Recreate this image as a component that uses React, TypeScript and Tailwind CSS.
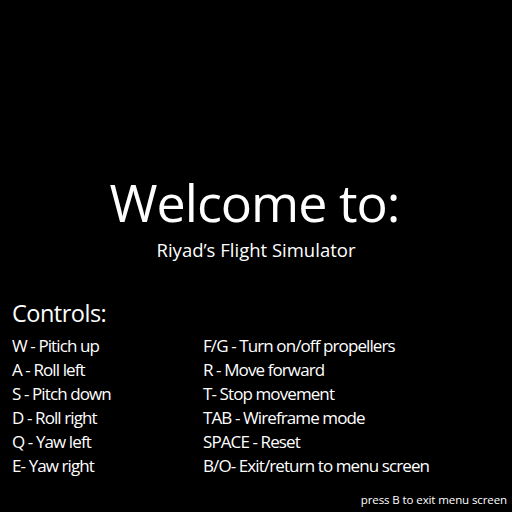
const left = [
  "W - Pitich up",
  "A - Roll left",
  "S - Pitch down",
  "D - Roll right",
  "Q - Yaw left",
  "E- Yaw right",
];

const right = [
  "F/G - Turn on/off propellers",
  "R - Move forward",
  "T- Stop movement",
  "TAB - Wireframe mode",
  "SPACE - Reset",
  "B/O- Exit/return to menu screen",
];

export default function App() {
  return (
    <div
      className="w-[512px] h-[512px] bg-black text-white flex flex-col overflow-hidden"
      style={{ fontFamily: '"Open Sans", sans-serif' }}
    >
      <div className="pt-[172px] flex flex-col items-center">
        <h1 className="text-[52px] leading-[60px] tracking-[-1px] pr-[3px]">Welcome to:</h1>
        <p className="mt-[6px] text-[18.5px] leading-[24px]">Riyad’s Flight Simulator</p>
      </div>
      <div className="pl-3 pt-[36px]">
        <h2 className="text-[23.5px] leading-[30px] tracking-[-0.5px]">Controls:</h2>
        <div className="mt-[6px] flex text-[17px] leading-[24px] tracking-[-0.9px]">
          <ul className="w-[191px]">
            {left.map((t) => (
              <li key={t}>{t}</li>
            ))}
          </ul>
          <ul>
            {right.map((t) => (
              <li key={t}>{t}</li>
            ))}
          </ul>
        </div>
      </div>
      <div className="mt-[15px] flex justify-end pr-[5px] text-[11.5px] leading-[14px] tracking-[-0.1px]">
        press B to exit menu screen
      </div>
    </div>
  );
}
